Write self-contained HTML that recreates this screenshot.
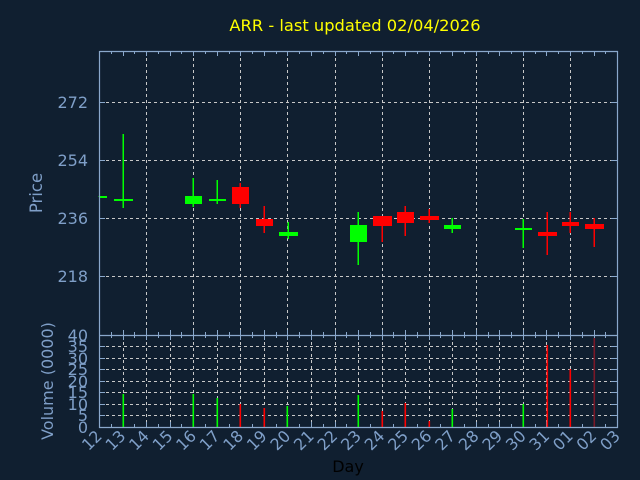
<!DOCTYPE html>
<html><head><meta charset="utf-8"><style>
html,body{margin:0;padding:0;background:#101f30;width:640px;height:480px;overflow:hidden}
svg text{font-family:"DejaVu Sans","Liberation Sans",sans-serif}
</style></head><body>
<svg id="s" width="640" height="480" xmlns="http://www.w3.org/2000/svg">
<rect width="640" height="480" fill="#101f30"/>
<text x="355" y="31" fill="#ffff00" font-size="16.3" text-anchor="middle">ARR - last updated 02/04/2026</text>
<g id="grid" stroke="#c8c8c8" stroke-width="1" stroke-dasharray="3,3" fill="none"></g>
<g id="ticks" stroke="#8aa8cc" stroke-width="1" fill="none"></g>
<g id="candles"></g>
<path d="M99.5 51 V427.5 H617.5 V51.5 H99.5 M99 335.5 H617" stroke="#8aa8cc" stroke-width="1.2" fill="none"/>
<g fill="#7f9fc8" font-size="16" text-anchor="end">
<text x="88" y="108">272</text><text x="88" y="166">254</text><text x="88" y="224">236</text><text x="88" y="282">218</text>
</g>
<g fill="#7f9fc8" font-size="16" text-anchor="end">
<text x="88" y="341">40</text><text x="88" y="352">35</text><text x="88" y="364">30</text><text x="88" y="375">25</text><text x="88" y="387">20</text><text x="88" y="398">15</text><text x="88" y="410">10</text><text x="88" y="421">5</text><text x="88" y="433">0</text>
</g>
<text transform="translate(42,193) rotate(-90)" fill="#7f9fc8" font-size="16.5" text-anchor="middle">Price</text>
<text transform="translate(53,381) rotate(-90)" fill="#7f9fc8" font-size="16" text-anchor="middle">Volume (0000)</text>
<g id="xl" fill="#7f9fc8" font-size="16"></g>
<text x="348" y="472" fill="#000" font-size="16" text-anchor="middle">Day</text>
</svg>
<script>
var NS="http://www.w3.org/2000/svg";
function el(p,t,a){var e=document.createElementNS(NS,t);for(var k in a)e.setAttribute(k,a[k]);p.appendChild(e);return e;}
var X=function(i){return 99+i*23.55;};
var g=document.getElementById('grid'),tk=document.getElementById('ticks');
var d="";
[102.5,160.5,218.5,276.5].forEach(function(y){d+="M100 "+y+"H617";});
for(var i=2;i<22;i+=2){var x=Math.round(X(i))+.5;d+="M"+x+" 52V335";}
for(var i=1;i<22;i++){var x=Math.round(X(i))+.5;d+="M"+x+" 336V427";}
[415.5,404.5,392.5,381.5,369.5,358.5,346.5].forEach(function(y){d+="M100 "+y+"H617";});
el(g,'path',{d:d});
var t="";
for(var i=0;i<44;i++){var x=Math.round(99+i*11.775)+.5;var L=(i%2==0)?5:3;t+="M"+x+" 51V"+(51+L)+"M"+x+" 335V"+(335+L)+"M"+x+" 427V"+(427-L)+"M"+x+" 335V"+(335-L);}
[102.5,160.5,218.5,276.5,346.5,358.5,369.5,381.5,392.5,404.5,415.5].forEach(function(y){t+="M617 "+y+"H611M100 "+y+"H105";});
el(tk,'path',{d:t});
var c=document.getElementById('candles');
var G="#00ff00",R="#ff0000";
var cs=[[99,G,196,197,196,197,99,107],[123,G,134,208,199,201,114,133],[193,G,178,207,196,204,185,202],[217,G,180,204,199,201,209,226],[240,R,183,208,187,204,232,249],[264,R,206,233,219,226,256,273],[288,G,222,239,232,236,279,298],[358,G,212,265,225,242,350,367],[382,R,216,242,216,226,373,392],[405,R,206,236,212,223,397,414],[429,R,209,223,216,220,420,439],[452,G,218,233,225,229,444,461],[523,G,219,248,228,230,515,532],[547,R,212,255,232,236,538,557],[570,R,212,233,222,226,562,579],[594,R,218,247,224,229,585,604]];
cs.forEach(function(k){el(c,'rect',{x:k[0]-0.5,y:k[2],width:1.5,height:k[3]-k[2],fill:k[1]});el(c,'rect',{x:k[6],y:k[4],width:k[7]-k[6],height:Math.max(2,k[5]-k[4]),fill:k[1]});});
var vs=[[123,G,394],[193,G,394],[217,G,398],[240,R,404],[264,R,408],[287,G,406],[358,G,395],[382,R,411],[405,R,403],[429,R,421],[452,G,409],[523,G,404],[547,R,345],[570,R,369],[594,"#7a1828",338]];
vs.forEach(function(v){el(c,'rect',{x:v[0]-0.5,y:v[2],width:1.6,height:427-v[2],fill:v[1]});});
var labs=["12","13","14","15","16","17","18","19","20","21","22","23","24","25","26","27","28","29","30","31","01","02","03"];
var xl=document.getElementById('xl');
labs.forEach(function(s,i){var x=X(i);var e=el(xl,'text',{transform:"translate("+(x+4)+",437) rotate(-45)","text-anchor":"end"});e.textContent=s;});
</script>
</body></html>
